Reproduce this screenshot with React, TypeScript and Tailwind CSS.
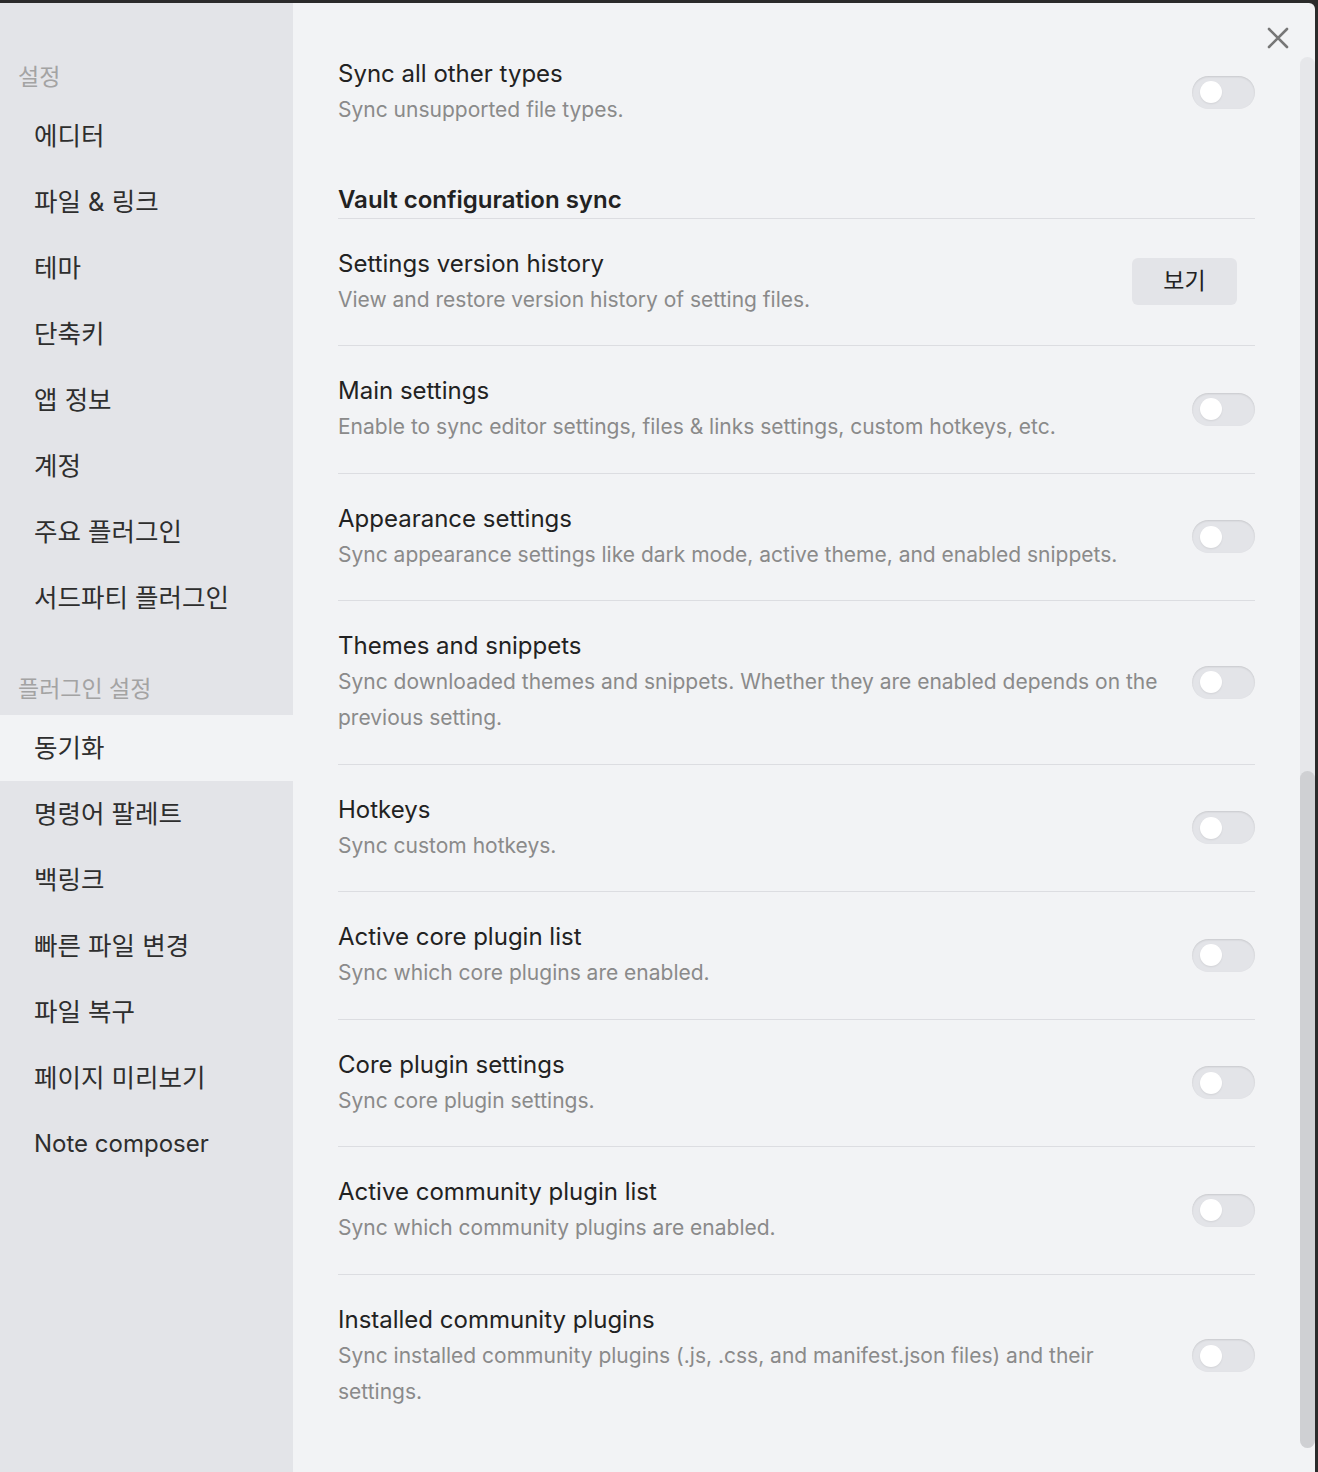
const sidebarCore = ["에디터", "파일 & 링크", "테마", "단축키", "앱 정보", "계정", "주요 플러그인", "서드파티 플러그인"];
const sidebarPlugins = ["동기화", "명령어 팔레트", "백링크", "빠른 파일 변경", "파일 복구", "페이지 미리보기", "Note composer"];

interface SettingItem {
  name: string;
  desc: string;
  button?: string;
}

const items: SettingItem[] = [
  { name: "Settings version history", desc: "View and restore version history of setting files.", button: "보기" },
  { name: "Main settings", desc: "Enable to sync editor settings, files & links settings, custom hotkeys, etc." },
  { name: "Appearance settings", desc: "Sync appearance settings like dark mode, active theme, and enabled snippets." },
  {
    name: "Themes and snippets",
    desc: "Sync downloaded themes and snippets. Whether they are enabled depends on the previous setting.",
  },
  { name: "Hotkeys", desc: "Sync custom hotkeys." },
  { name: "Active core plugin list", desc: "Sync which core plugins are enabled." },
  { name: "Core plugin settings", desc: "Sync core plugin settings." },
  { name: "Active community plugin list", desc: "Sync which community plugins are enabled." },
  {
    name: "Installed community plugins",
    desc: "Sync installed community plugins (.js, .css, and manifest.json files) and their settings.",
  },
];

const font = "font-['Inter','Noto_Sans_CJK_KR',sans-serif]";
const hasHangul = (s: string) => /[\uac00-\ud7a3]/.test(s);

function Toggle() {
  return (
    <div className="flex h-[33px] w-[63px] shrink-0 items-center rounded-full bg-[#e3e4e8] pl-[8px] shadow-[inset_0_1px_2px_rgba(0,0,0,0.12)]">
      <div className="h-[22px] w-[22px] rounded-full bg-white shadow-[0_1px_2px_rgba(0,0,0,0.08)]" />
    </div>
  );
}

function SettingRow({ item, first }: { item: SettingItem; first?: boolean }) {
  return (
    <div
      className={`flex items-center gap-6 pt-[27px] pb-[27.5px] ${first ? "border-t-0" : "border-t border-[#dcdde1]"}`}
    >
      <div className="min-w-0 flex-1">
        <div className="text-[24px] leading-[36px] text-[#222]">{item.name}</div>
        <div className="text-[21px] leading-[36px] text-[#8a8a8a]">{item.desc}</div>
      </div>
      {item.button ? (
        <button className="mr-[18px] h-[47px] w-[105px] shrink-0 rounded-[6px] bg-[#e3e4e8] text-[23px] text-[#222]">
          {item.button}
        </button>
      ) : (
        <Toggle />
      )}
    </div>
  );
}

function NavItem({ label, active }: { label: string; active?: boolean }) {
  return (
    <div
      className={`flex h-[66px] items-center pl-[34px] text-[#2e2e2e] ${hasHangul(label) ? "text-[25.5px]" : "text-[24px]"} ${active ? "bg-[#f2f3f5]" : ""}`}
    >
      {label}
    </div>
  );
}

export default function App() {
  return (
    <div className={`h-[1472px] w-[1318px] overflow-hidden bg-[#2b2b2b] pt-[3px] pr-[3px] ${font}`}>
      <div className="relative flex h-full w-full overflow-hidden rounded-tr-[6px] bg-[#f2f3f5]">
        <aside className="w-[293px] shrink-0 bg-[#e3e4e8] pt-[56px]">
          <div className="flex h-[36px] items-center pl-[18px] text-[23px] text-[#a3a3a3]">설정</div>
          <div className="mt-[8px]">
            {sidebarCore.map((l) => (
              <NavItem key={l} label={l} />
            ))}
          </div>
          <div className="mt-[40px] flex h-[36px] items-center pl-[18px] text-[23px] text-[#a3a3a3]">플러그인 설정</div>
          <div className="mt-[8px]">
            {sidebarPlugins.map((l) => (
              <NavItem key={l} label={l} active={l === "동기화"} />
            ))}
          </div>
        </aside>

        <main className="flex-1 pl-[45px] pr-[60px] pt-[26px]">
          <SettingRow item={{ name: "Sync all other types", desc: "Sync unsupported file types." }} first />
          <div className="mt-[26px] border-b border-[#dcdde1] text-[24px] font-semibold leading-[36px] text-[#222]">
            Vault configuration sync
          </div>
          {items.map((it, i) => (
            <SettingRow key={it.name} item={it} first={i === 0} />
          ))}
        </main>

        <svg
          className="absolute right-[26px] top-[24px] text-[#777]"
          width="22"
          height="22"
          viewBox="0 0 22 22"
          fill="none"
          stroke="currentColor"
          strokeWidth="2.6"
          strokeLinecap="round"
        >
          <path d="M2 2 L20 20 M20 2 L2 20" />
        </svg>

        <div className="absolute right-0 top-[54px] h-[1391px] w-[15px] rounded-full bg-[#e6e7ea]">
          <div className="absolute bottom-0 left-0 h-[677px] w-[15px] rounded-full bg-[#cfd0d3]" />
        </div>
      </div>
    </div>
  );
}
